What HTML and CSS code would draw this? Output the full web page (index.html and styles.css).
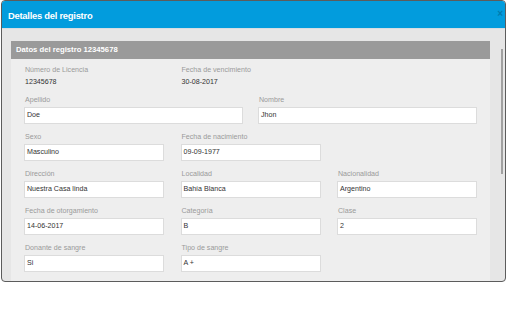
FILE: index.html
```html
<!DOCTYPE html>
<html lang="es">
<head>
<meta charset="utf-8">
<title>Detalles del registro</title>
<link rel="stylesheet" href="styles.css">
</head>
<body>
<div class="modal">
  <div class="modal-header">
    <span class="modal-title">Detalles del registro</span>
    <span class="close">×</span>
  </div>
  <div class="modal-body">
    <div class="panel">
      <div class="panel-heading">Datos del registro 12345678</div>
      <div class="panel-body">
        <div class="row cols3">
          <div class="field"><div class="label">Número de Licencia</div><div class="value">12345678</div></div>
          <div class="field"><div class="label">Fecha de vencimiento</div><div class="value">30-08-2017</div></div>
        </div>
        <div class="row cols2">
          <div class="field"><div class="label">Apellido</div><div class="input">Doe</div></div>
          <div class="field"><div class="label">Nombre</div><div class="input">Jhon</div></div>
        </div>
        <div class="row cols3">
          <div class="field"><div class="label">Sexo</div><div class="input">Masculino</div></div>
          <div class="field"><div class="label">Fecha de nacimiento</div><div class="input">09-09-1977</div></div>
        </div>
        <div class="row cols3">
          <div class="field"><div class="label">Dirección</div><div class="input">Nuestra Casa linda</div></div>
          <div class="field"><div class="label">Localidad</div><div class="input">Bahía Blanca</div></div>
          <div class="field"><div class="label">Nacionalidad</div><div class="input">Argentino</div></div>
        </div>
        <div class="row cols3">
          <div class="field"><div class="label">Fecha de otorgamiento</div><div class="input">14-06-2017</div></div>
          <div class="field"><div class="label">Categoría</div><div class="input">B</div></div>
          <div class="field"><div class="label">Clase</div><div class="input">2</div></div>
        </div>
        <div class="row cols3">
          <div class="field"><div class="label">Donante de sangre</div><div class="input">Si</div></div>
          <div class="field"><div class="label">Tipo de sangre</div><div class="input">A +</div></div>
        </div>
      </div>
    </div>
    <div class="scrollbar"><div class="thumb"></div></div>
  </div>
</div>
</body>
</html>
```
FILE: styles.css
```css
html, body {
  margin: 0;
  padding: 0;
  background: #ffffff;
}
body {
  font-family: "Liberation Sans", Arial, sans-serif;
  padding: 0 0 0 1px;
}
.modal {
  box-sizing: border-box;
  width: 505px;
  height: 282px;
  border: 1px solid #5c5c5c;
  border-radius: 4px;
  overflow: hidden;
  background: #e6e6e6;
  display: flex;
  flex-direction: column;
}
.modal-header {
  flex: 0 0 27px;
  background: #029cdd;
  display: flex;
  align-items: center;
  justify-content: space-between;
  padding: 0 2px 0 6px;
  border-bottom: 1px solid #d6dde2;
}
.modal-title {
  color: #ffffff;
  font-size: 9.4px;
  font-weight: bold;
  letter-spacing: -0.25px;
  margin-top: 1px;
}
.close {
  color: #000;
  opacity: 0.22;
  font-size: 10px;
  font-weight: bold;
  line-height: 1;
  margin-top: -2px;
}
.modal-body {
  flex: 1;
  display: flex;
  padding: 12px 0 0 9px;
  overflow: hidden;
}
.panel {
  flex: 0 0 479px;
  display: flex;
  flex-direction: column;
}
.panel-heading {
  height: 18px;
  background: #9a9a9a;
  color: #ffffff;
  font-size: 7.7px;
  font-weight: bold;
  line-height: 18px;
  padding-left: 5px;
}
.panel-body {
  flex: 1;
  background: #eeeeee;
  padding: 6px 13px 0 13px;
}
.row {
  display: grid;
  margin-bottom: 8px;
}
.cols3 {
  grid-template-columns: repeat(3, 1fr);
  column-gap: 16.5px;
}
.cols2 {
  grid-template-columns: repeat(2, 1fr);
  column-gap: 15px;
}
.label {
  color: #9a9a9a;
  font-size: 7.1px;
  line-height: 10px;
  margin-bottom: 2px;
  padding-left: 1px;
}
.value {
  color: #333333;
  font-size: 7.1px;
  line-height: 10px;
  padding-left: 1px;
}
.input {
  box-sizing: border-box;
  height: 17px;
  background: #ffffff;
  border: 1px solid #dcdcdc;
  color: #333333;
  font-size: 7.1px;
  line-height: 15px;
  padding: 0 2px;
}
.scrollbar {
  margin-left: auto;
  width: 4px;
  display: flex;
  flex-direction: column;
}
.thumb {
  margin-top: 8px;
  width: 2px;
  height: 125px;
  background: #a0a0a0;
}
```
